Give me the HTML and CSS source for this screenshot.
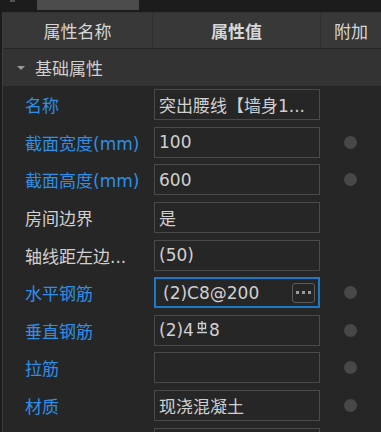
FILE: index.html
```html
<!DOCTYPE html>
<html lang="zh-CN">
<head>
  <meta charset="UTF-8">
  <title>属性</title>
  <link rel="stylesheet" href="styles.css">
</head>
<body>
  <!-- 顶部标签条 -->
  <div class="tabbar">
    <span class="tab-mark"></span>
    <span class="tab"></span>
  </div>

  <div class="panel">
    <!-- 表头 -->
    <div class="head">
      <div class="head-cell">属性名称</div>
      <div class="head-cell bold">属性值</div>
      <div class="head-cell">附加</div>
    </div>

    <!-- 分组 -->
    <div class="group">
      <span class="caret"></span>
      <span>基础属性</span>
    </div>

    <div class="rows">
      <div class="row">
        <div class="label blue">名称</div>
        <div class="value"><div class="box">突出腰线【墙身1...</div></div>
        <div class="extra"></div>
      </div>
      <div class="row">
        <div class="label blue">截面宽度(mm)</div>
        <div class="value"><div class="box">100</div></div>
        <div class="extra"><span class="dot"></span></div>
      </div>
      <div class="row">
        <div class="label blue">截面高度(mm)</div>
        <div class="value"><div class="box">600</div></div>
        <div class="extra"><span class="dot"></span></div>
      </div>
      <div class="row">
        <div class="label">房间边界</div>
        <div class="value"><div class="box">是</div></div>
        <div class="extra"></div>
      </div>
      <div class="row">
        <div class="label">轴线距左边...</div>
        <div class="value"><div class="box">(50)</div></div>
        <div class="extra"></div>
      </div>
      <div class="row">
        <div class="label blue">水平钢筋</div>
        <div class="value"><div class="box active">(2)C8@200<span class="more"><i></i><i></i><i></i></span></div></div>
        <div class="extra"><span class="dot"></span></div>
      </div>
      <div class="row">
        <div class="label blue">垂直钢筋</div>
        <div class="value"><div class="box">(2)4<svg class="rebar" width="12" height="13" viewBox="0 0 12 13"><path d="M2.5 2.5h7v5h-7z M6 0v10 M1 11.5h10" fill="none" stroke="#d0d0d0" stroke-width="1.3"/></svg>8</div></div>
        <div class="extra"><span class="dot"></span></div>
      </div>
      <div class="row">
        <div class="label blue">拉筋</div>
        <div class="value"><div class="box"></div></div>
        <div class="extra"><span class="dot"></span></div>
      </div>
      <div class="row">
        <div class="label blue">材质</div>
        <div class="value"><div class="box">现浇混凝土</div></div>
        <div class="extra"><span class="dot"></span></div>
      </div>
      <div class="row">
        <div class="label blue"></div>
        <div class="value"><div class="box"></div></div>
        <div class="extra"></div>
      </div>
    </div>
  </div>
</body>
</html>
```

FILE: styles.css
```css
/* 全局 */
body {
  margin: 0;
  background: #1c1c1c;
  color: #d0d0d0;
  font-family: "DejaVu Sans", "Noto Sans CJK SC", sans-serif;
  font-size: 17px;
  overflow: hidden;
  height: 432px;
}

/* 顶部标签条 */
.tabbar {
  height: 12px;
  display: flex;
  align-items: flex-start;
}
.tab-mark {
  width: 5px;
  height: 2px;
  margin-left: 10px;
  background: #555;
}
.tab {
  width: 102px;
  height: 10px;
  margin-left: 22px;
  background: #4b4b4b;
}

/* 面板 */
.panel {
  margin-left: 2px;
  border-left: 1px solid #3e3e3e;
  border-top: 1px solid #333;
  background: #262626;
  height: 419px;
  overflow: hidden;
}

.head {
  display: grid;
  grid-template-columns: 150px 168px 1fr;
  height: 35px;
  background: #383838;
  border-bottom: 1px solid #262626;
}
.head-cell {
  display: flex;
  align-items: center;
  justify-content: center;
  border-right: 1px solid #303030;
  color: #d6d6d6;
}
.head-cell:last-child {
  border-right: none;
}
.bold {
  font-weight: bold;
}

/* 分组行 */
.group {
  display: flex;
  align-items: center;
  height: 37px;
  background: #333333;
  gap: 10px;
  padding-left: 14px;
}
.caret {
  width: 0;
  height: 0;
  border-left: 4px solid transparent;
  border-right: 4px solid transparent;
  border-top: 4px solid #9a9a9a;
}

/* 属性行 */
.row {
  display: grid;
  grid-template-columns: 150px 168px 1fr;
  height: 37.6px;
  align-items: center;
}
.label {
  padding-left: 22px;
  white-space: nowrap;
}
.blue {
  color: #2f8fe6;
}
.value {
  padding: 0 1px;
}
.box {
  height: 31px;
  box-sizing: border-box;
  border: 1px solid #4a4a4a;
  padding: 0 4px;
  display: flex;
  align-items: center;
  white-space: nowrap;
  overflow: hidden;
}
.box.active {
  border: 2px solid #1a78c8;
  padding: 0 3px 0 7px;
}
.more {
  margin-left: auto;
  width: 21px;
  height: 18px;
  border: 1px solid #5a5a5a;
  border-radius: 3px;
  display: flex;
  align-items: center;
  justify-content: center;
  gap: 3px;
}
.more i {
  width: 3px;
  height: 3px;
  background: #9a9a9a;
}
.rebar {
  margin: 0 1px 6px 2px;
}
.extra {
  display: flex;
  justify-content: center;
  padding-right: 2px;
}
.dot {
  width: 13px;
  height: 13px;
  border-radius: 50%;
  background: #484848;
}
```
